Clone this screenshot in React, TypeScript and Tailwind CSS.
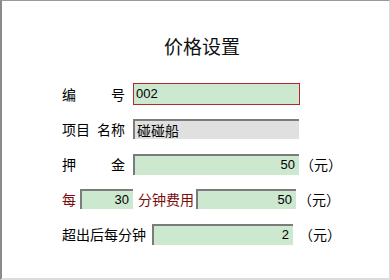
const cjk = { fontFamily: '"Noto Sans CJK SC", "Noto Sans", sans-serif' }
const num = { fontFamily: '"Liberation Sans", Arial, sans-serif' }

const Field = (props: { w: string; value: string; right?: boolean; tone?: "green" | "gray" | "focus" }) => {
  const tone = props.tone ?? "green"
  const box =
    tone === "focus"
      ? "border border-[#b5262b] bg-[#cce8cf]"
      : tone === "gray"
        ? "border-t-2 border-l-2 border-[#7b7b7b] bg-[#e0e0e0]"
        : "border-t-2 border-l-2 border-[#7b7b7b] bg-[#cce8cf]"
  const isNum = /[0-9]/.test(props.value)
  return (
    <div
      className={`${props.w} ${box} flex items-center px-[2px] ${isNum ? "text-[13px]" : "text-[14px]"} text-black ${props.right ? "justify-end pr-[4px]" : ""}`}
      style={isNum ? num : cjk}
    >
      {props.value}
    </div>
  )
}

const Yuan = (props: { ml: string }) => (
  <span className={`${props.ml} text-[14px] text-black`} style={cjk}>
    （元）
  </span>
)

export default function App() {
  return (
    <div
      className="w-[390px] h-[280px] bg-white border-t border-t-[#9a9a9a] border-l-2 border-l-[#8a8a8a] border-r border-r-[#dcdcdc] border-b-2 border-b-[#dcdcdc] flex flex-col"
      style={cjk}
    >
      <div className="mt-[31px] h-[28px] pl-[13px] text-center text-[19px] leading-[28px] text-[#111]">价格设置</div>

      <div className="mt-[23px] pl-[60px] flex flex-col gap-[13px] text-[14px] text-black">
        <div className="h-[22px] flex items-center">
          <div className="w-[63px] flex justify-between">
            <span>编</span>
            <span>号</span>
          </div>
          <div className="ml-[8px] h-[22px] flex">
            <Field w="w-[167px]" value="002" tone="focus" />
          </div>
        </div>

        <div className="h-[22px] flex items-center">
          <div className="w-[63px] flex justify-between">
            <span>项目</span>
            <span>名称</span>
          </div>
          <div className="ml-[8px] h-[20px] flex">
            <Field w="w-[166px]" value="碰碰船" tone="gray" />
          </div>
        </div>

        <div className="h-[22px] flex items-center">
          <div className="w-[63px] flex justify-between">
            <span>押</span>
            <span>金</span>
          </div>
          <div className="ml-[8px] h-[21px] flex">
            <Field w="w-[166px]" value="50" right />
          </div>
          <Yuan ml="ml-[1px]" />
        </div>

        <div className="h-[22px] flex items-center">
          <span className="text-[#7a0d0d]">每</span>
          <div className="ml-[4px] h-[20px] flex">
            <Field w="w-[53px]" value="30" right />
          </div>
          <span className="ml-[5px] text-[#7a0d0d]">分钟费用</span>
          <div className="ml-[2px] h-[20px] flex">
            <Field w="w-[100px]" value="50" right />
          </div>
          <Yuan ml="ml-[2px]" />
        </div>

        <div className="h-[22px] flex items-center">
          <span>超出后每分钟</span>
          <div className="ml-[6px] h-[21px] flex">
            <Field w="w-[141px]" value="2" right />
          </div>
          <Yuan ml="ml-[6px]" />
        </div>
      </div>
    </div>
  )
}
